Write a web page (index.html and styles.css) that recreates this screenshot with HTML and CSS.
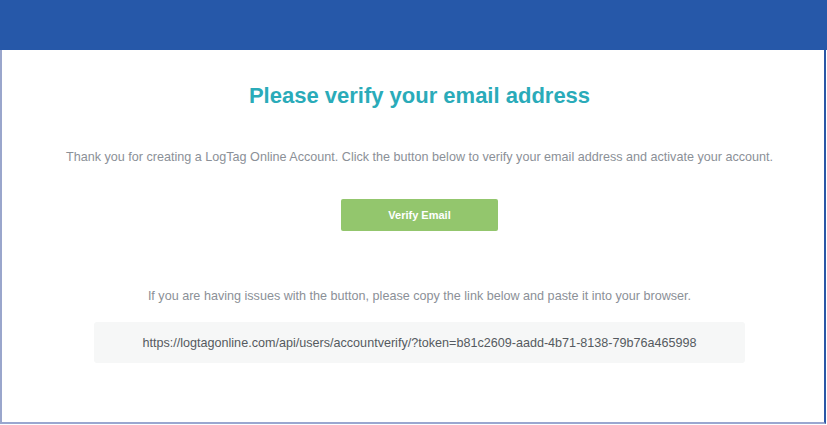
FILE: index.html
```html
<!DOCTYPE html>
<html>
<head>
<meta charset="utf-8">
<link rel="stylesheet" href="styles.css">
</head>
<body>
<div class="page">
  <div class="header"></div>
  <div class="content">
    <div class="inner">
      <h1 class="title">Please verify your email address</h1>
      <p class="intro">Thank you for creating a LogTag Online Account. Click the button below to verify your email address and activate your account.</p>
      <div class="btn-row"><a class="btn">Verify Email</a></div>
      <p class="issues">If you are having issues with the button, please copy the link below and paste it into your browser.</p>
      <div class="link-box">https://logtagonline.com/api/users/accountverify/?token=b81c2609-aadd-4b71-8138-79b76a465998</div>
    </div>
  </div>
</div>
</body>
</html>
```
FILE: styles.css
```css
html, body { margin: 0; padding: 0; background: #ffffff; }
body { font-family: "Liberation Sans", Arial, sans-serif; width: 827px; height: 425px; overflow: hidden; }
.page { width: 827px; }
.header { height: 50px; background: #2658a9; }
.content {
  height: 372px;
  border-left: 2px solid #9aa6cc;
  border-right: 2px solid #2a57a6;
  border-bottom: 2px solid #99a7d0;
  margin-right: 1px;
  box-sizing: content-box;
  width: 822px;
}
.inner { padding-left: 13px; display: flex; flex-direction: column; align-items: center; }
.title {
  margin: 33px 0 0;
  font-size: 22px;
  font-weight: bold;
  color: #2aabb9;
  line-height: 26px;
}
.intro {
  margin: 40px 0 0;
  font-size: 12.6px;
  line-height: 16px;
  color: #8b9097;
}
.btn-row { margin-top: 34px; }
.btn {
  display: flex; align-items: center; justify-content: center;
  width: 157px; height: 32px;
  background: #93c66d;
  border-radius: 2px;
  color: #ffffff;
  font-size: 11px;
  font-weight: bold;
}
.issues {
  margin: 57px 0 0;
  font-size: 12.6px;
  line-height: 16px;
  color: #8b9097;
}
.link-box {
  margin-top: 18px;
  width: 651px; height: 41px;
  display: flex; align-items: center; justify-content: center;
  background: #f6f7f7;
  border-radius: 3px;
  font-size: 12.6px;
  color: #555a60;
}
```
